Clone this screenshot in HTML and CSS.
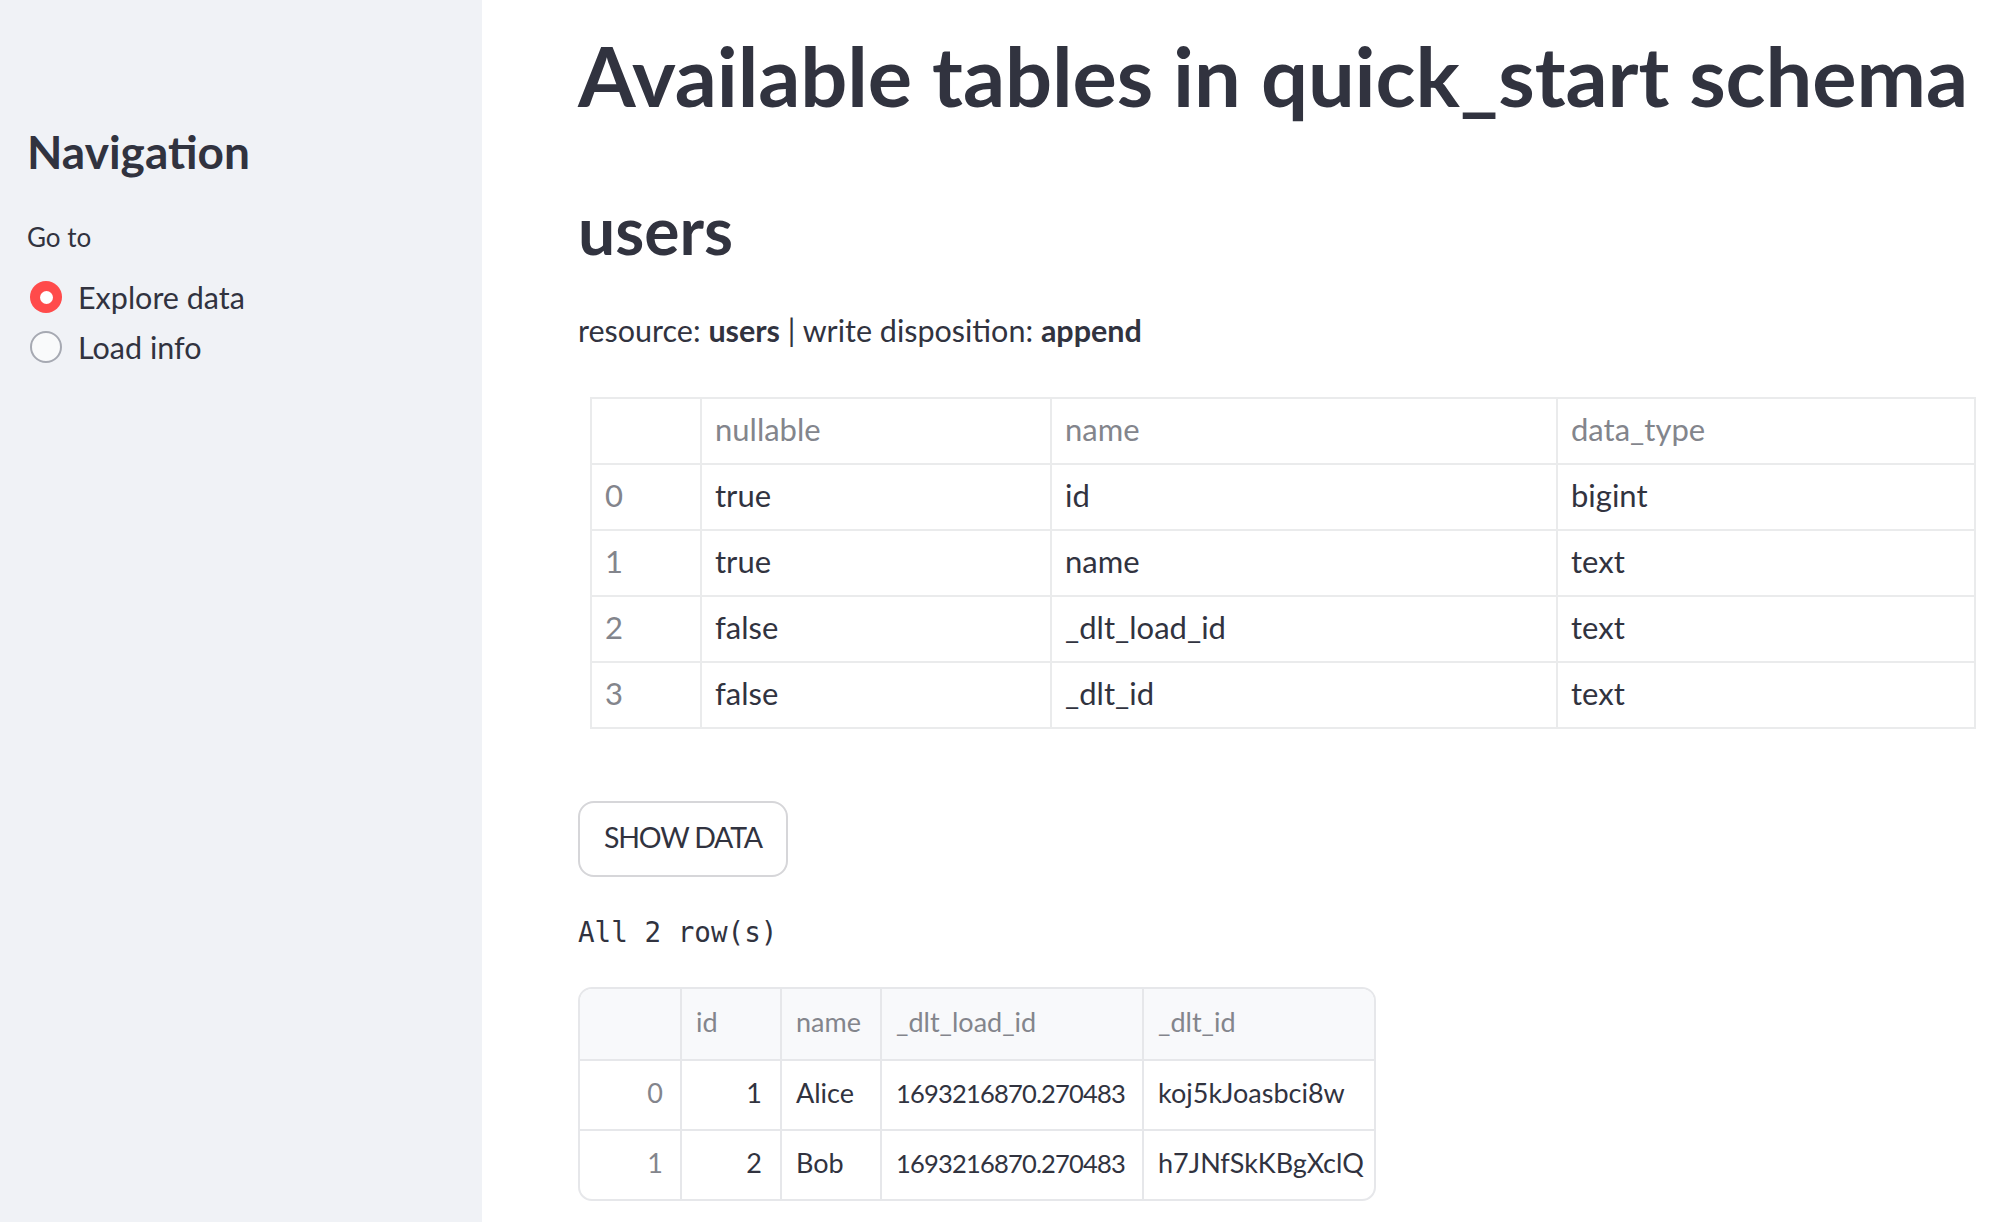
FILE: index.html
```html
<!DOCTYPE html>
<html lang="en">
<head>
<meta charset="utf-8">
<title>Explore data</title>
<link rel="stylesheet" href="styles.css">
</head>
<body>
<div class="app">
  <aside class="sidebar">
    <h2 class="nav-title">Navigation</h2>
    <div class="radio-label">Go to</div>
    <div class="radio-group">
      <label class="radio"><span class="radio-dot checked"></span><span class="radio-text">Explore data</span></label>
      <label class="radio"><span class="radio-dot"></span><span class="radio-text">Load info</span></label>
    </div>
  </aside>
  <main class="main">
    <h1 class="title">Available tables in quick_start schema</h1>
    <h2 class="subtitle">users</h2>
    <p class="caption">resource: <strong>users</strong> | write disposition: <strong>append</strong></p>
    <table class="schema-table">
      <colgroup><col class="c0"><col class="c1"><col class="c2"><col class="c3"></colgroup>
      <thead>
        <tr><th></th><th>nullable</th><th>name</th><th>data_type</th></tr>
      </thead>
      <tbody>
        <tr><th>0</th><td>true</td><td>id</td><td>bigint</td></tr>
        <tr><th>1</th><td>true</td><td>name</td><td>text</td></tr>
        <tr><th>2</th><td>false</td><td>_dlt_load_id</td><td>text</td></tr>
        <tr><th>3</th><td>false</td><td>_dlt_id</td><td>text</td></tr>
      </tbody>
    </table>
    <button class="btn">SHOW DATA</button>
    <pre class="mono">All 2 row(s)</pre>
    <div class="grid">
      <table class="grid-table">
        <colgroup><col class="g0"><col class="g1"><col class="g2"><col class="g3"><col class="g4"></colgroup>
        <thead>
          <tr><th></th><th>id</th><th>name</th><th>_dlt_load_id</th><th>_dlt_id</th></tr>
        </thead>
        <tbody>
          <tr><td class="idx">0</td><td class="num">1</td><td>Alice</td><td class="load">1693216870.270483</td><td>koj5kJoasbci8w</td></tr>
          <tr><td class="idx">1</td><td class="num">2</td><td>Bob</td><td class="load">1693216870.270483</td><td>h7JNfSkKBgXclQ</td></tr>
        </tbody>
      </table>
    </div>
  </main>
</div>
</body>
</html>
```
FILE: styles.css
```css
* { box-sizing: border-box; }
html, body { margin: 0; padding: 0; }
body {
  font-family: Lato, "Open Sans", sans-serif;
  color: #31333f;
  background: #ffffff;
}
.app {
  display: flex;
  min-height: 100vh;
}
.sidebar {
  width: 482px;
  flex: 0 0 482px;
  background: #f0f2f6;
  padding: 122px 20px 0 27px;
}
.nav-title {
  margin: 0;
  font-size: 46px;
  line-height: 60px;
  font-weight: 700;
  color: #31333f;
}
.radio-label {
  margin-top: 37px;
  font-size: 26px;
  line-height: 36px;
  color: #31333f;
}
.radio-group {
  margin-top: 22px;
  display: flex;
  flex-direction: column;
  gap: 10px;
}
.radio {
  display: flex;
  align-items: center;
  height: 40px;
  gap: 16px;
  padding-left: 3px;
}
.radio-dot {
  width: 32px;
  height: 32px;
  border-radius: 50%;
  border: 2px solid #a6a9b2;
  background: #f9fafb;
  flex: 0 0 32px;
  display: flex;
  align-items: center;
  justify-content: center;
}
.radio-dot.checked {
  border: none;
  background: #ff4b4b;
}
.radio-dot.checked::after {
  content: "";
  width: 13px;
  height: 13px;
  border-radius: 50%;
  background: #ffffff;
}
.radio-text {
  font-size: 30.5px;
  line-height: 40px;
}
.main {
  flex: 1;
  padding: 27px 0 0 96px;
  min-width: 0;
}
.title {
  margin: 0;
  font-size: 83px;
  line-height: 96px;
  font-weight: 700;
  white-space: nowrap;
  letter-spacing: -0.1px;
}
.subtitle {
  margin: 67px 0 0;
  font-size: 66px;
  line-height: 80px;
  font-weight: 700;
}
.caption {
  margin: 40px 0 0;
  font-size: 30.5px;
  line-height: 40px;
}
.caption strong { font-weight: 700; }
.schema-table {
  margin: 47px 0 0 12px;
  border-collapse: collapse;
  table-layout: fixed;
  width: 1384px;
  font-size: 31px;
}
.schema-table .c0 { width: 110px; }
.schema-table .c1 { width: 350px; }
.schema-table .c2 { width: 506px; }
.schema-table .c3 { width: 418px; }
.schema-table th,
.schema-table td {
  border: 2px solid #eaebec;
  padding: 0 13px 4px;
  line-height: 60px;
  text-align: left;
  font-weight: 400;
  white-space: nowrap;
}
.schema-table th { color: #83858c; }
.schema-table td { color: #31333f; }
.btn {
  display: block;
  margin-top: 72px;
  width: 210px;
  height: 76px;
  border: 2px solid #d6d6d9;
  border-radius: 16px;
  background: #ffffff;
  color: #31333f;
  font-family: Lato, "Open Sans", sans-serif;
  font-size: 28.5px;
  letter-spacing: -1.2px;
  padding: 0 0 4px;
}
.mono {
  margin: 38px 0 0;
  font-family: "DejaVu Sans Mono", "Liberation Mono", monospace;
  font-size: 27.6px;
  line-height: 36px;
  color: #31333f;
}
.grid {
  margin-top: 36px;
  width: 798px;
  border: 2px solid #e6e7ea;
  border-radius: 14px;
  overflow: hidden;
}
.grid-table {
  border-collapse: separate;
  border-spacing: 0;
  table-layout: fixed;
  width: 794px;
  font-size: 27px;
}
.grid-table .g0 { width: 102px; }
.grid-table .g1 { width: 100px; }
.grid-table .g2 { width: 100px; }
.grid-table .g3 { width: 262px; }
.grid-table .g4 { width: 230px; }
.grid-table th,
.grid-table td {
  border-right: 2px solid #e6e7ea;
  border-bottom: 2px solid #e6e7ea;
  padding: 0 16px 4px 14px;
  text-align: left;
  white-space: nowrap;
  overflow: hidden;
}
.grid-table th:last-child,
.grid-table td:last-child { border-right: none; }
.grid-table tbody tr:last-child td { border-bottom: none; }
.grid-table th {
  background: #f8f9fb;
  color: #83858c;
  font-weight: 400;
  line-height: 66px;
}
.grid-table td {
  color: #31333f;
  line-height: 64px;
}
.grid-table .load {
  font-size: 25.5px;
  letter-spacing: -0.8px;
  padding-right: 0;
}
.grid-table .idx {
  text-align: right;
  color: #83858c;
  padding-right: 17px;
}
.grid-table .num {
  text-align: right;
  padding-right: 18px;
}
```
